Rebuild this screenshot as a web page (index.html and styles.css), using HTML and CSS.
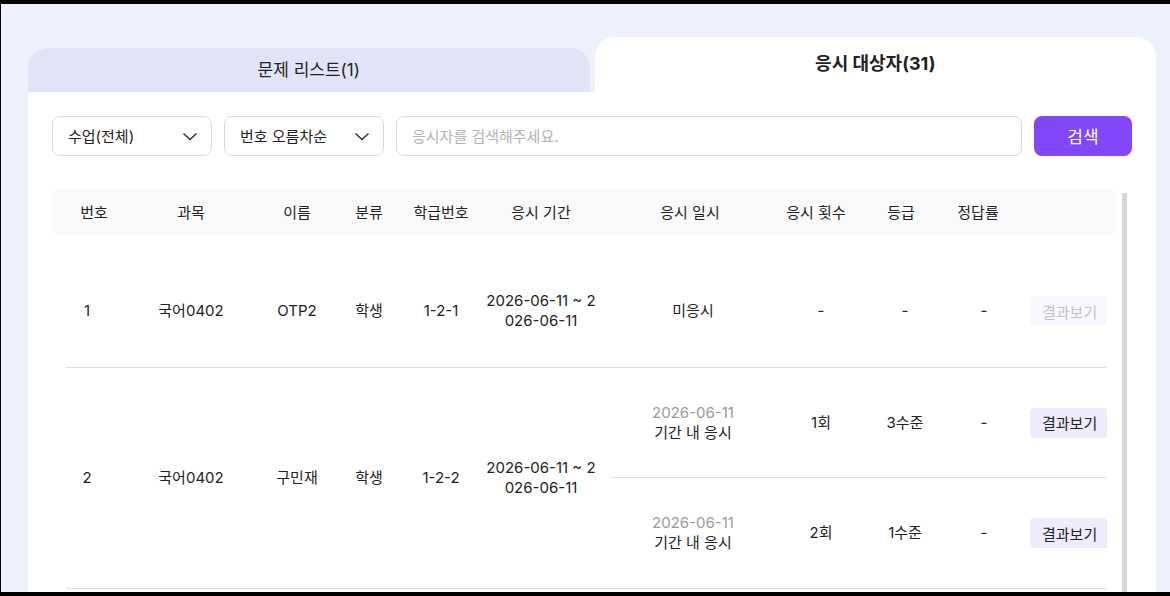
FILE: index.html
```html
<!DOCTYPE html>
<html lang="ko">
<head>
  <meta charset="UTF-8" />
  <meta name="viewport" content="width=device-width, initial-scale=1.0"/>
  <title>응시 대상자</title>
  <link rel="stylesheet" href="styles.css">
</head>
<body>

  <div class="screen">

    <!-- Tabs -->
    <div class="tabs">
      <div class="tab">문제 리스트(1)</div>
      <div class="tab active">응시 대상자(31)</div>
    </div>

    <div class="panel">

      <!-- Filters -->
      <div class="filters">
        <div class="select">
          <span>수업(전체)</span>
          <svg width="16" height="16" viewBox="0 0 16 16"><path d="M1.5 5.5l6.5 6 6.5-6" fill="none" stroke="#333" stroke-width="1.5"/></svg>
        </div>
        <div class="select">
          <span>번호 오름차순</span>
          <svg width="16" height="16" viewBox="0 0 16 16"><path d="M1.5 5.5l6.5 6 6.5-6" fill="none" stroke="#333" stroke-width="1.5"/></svg>
        </div>
        <input class="search" type="text" placeholder="응시자를 검색해주세요." />
        <button class="search-btn">검색</button>
      </div>

      <!-- Student list -->
      <div class="list">
        <div class="list-body">
          <div class="thead">
            <div>번호</div>
            <div>과목</div>
            <div>이름</div>
            <div>분류</div>
            <div>학급번호</div>
            <div>응시 기간</div>
            <div>응시 일시</div>
            <div>응시 횟수</div>
            <div>등급</div>
            <div>정답률</div>
            <div></div>
          </div>

          <div class="row first">
            <div class="cell no">1</div>
            <div class="cell">국어0402</div>
            <div class="cell">OTP2</div>
            <div class="cell">학생</div>
            <div class="cell">1-2-1</div>
            <div class="cell period">2026-06-11 ~ 2026-06-11</div>
            <div class="attempts">
              <div class="attempt">
                <div class="cell date">미응시</div>
                <div class="cell">-</div>
                <div class="cell">-</div>
                <div class="cell">-</div>
                <div class="cell action"><button class="result-btn disabled">결과보기</button></div>
              </div>
            </div>
          </div>

          <div class="row">
            <div class="cell no">2</div>
            <div class="cell">국어0402</div>
            <div class="cell">구민재</div>
            <div class="cell">학생</div>
            <div class="cell">1-2-2</div>
            <div class="cell period">2026-06-11 ~ 2026-06-11</div>
            <div class="attempts">
              <div class="attempt">
                <div class="cell date"><span class="day">2026-06-11</span><span>기간 내 응시</span></div>
                <div class="cell">1회</div>
                <div class="cell">3수준</div>
                <div class="cell">-</div>
                <div class="cell action"><button class="result-btn">결과보기</button></div>
              </div>
              <div class="attempt">
                <div class="cell date"><span class="day">2026-06-11</span><span>기간 내 응시</span></div>
                <div class="cell">2회</div>
                <div class="cell">1수준</div>
                <div class="cell">-</div>
                <div class="cell action"><button class="result-btn">결과보기</button></div>
              </div>
            </div>
          </div>
        </div>
        <div class="scrollbar"></div>
      </div>

    </div>
  </div>

</body>
</html>
```

FILE: styles.css
```css
* {
  margin: 0;
  padding: 0;
  box-sizing: border-box;
  font-family: Inter, "Noto Sans CJK KR", sans-serif;
}

body {
  background: #000;
}

.screen {
  height: 596px;
  background: #edf1fb;
  border-top: 4px solid #000;
  border-bottom: 4px solid #000;
  border-left: 1px solid #000;
  padding: 33px 14px 0 27px;
  overflow: hidden;
  color: #222;
}

/* tabs */
.tabs {
  display: flex;
  align-items: flex-end;
  gap: 5px;
}

.tab {
  flex: 1;
  height: 44px;
  background: #e2e3f6;
  border-radius: 20px 20px 0 0;
  display: flex;
  justify-content: center;
  align-items: center;
  padding-bottom: 4px;
  font-size: 17px;
}

.tab.active {
  height: 55px;
  background: white;
  font-size: 18px;
  font-weight: bold;
  padding-bottom: 5px;
}

.panel {
  background: white;
  padding: 24px 24px 0 24px;
  height: 600px;
}

/* filters */
.filters {
  display: flex;
  gap: 12px;
  height: 40px;
}

.select {
  width: 160px;
  border: 1px solid #d9d9d9;
  border-radius: 8px;
  display: flex;
  align-items: center;
  justify-content: space-between;
  padding: 0 13px 1px 15px;
  font-size: 15px;
}

.search {
  flex: 1;
  border: 1px solid #d9d9d9;
  border-radius: 8px;
  padding: 0 15px;
  font-size: 15px;
  outline: none;
}

.search::placeholder {
  color: #b3b3b3;
}

.search-btn {
  width: 98px;
  border: none;
  border-radius: 8px;
  background: #8247f9;
  color: white;
  font-size: 17px;
  padding-bottom: 2px;
}

/* list */
.list {
  display: flex;
  gap: 5px;
  margin: 33px 5px 0 0;
}

.list-body {
  flex: 1;
}

.scrollbar {
  width: 5px;
  margin-top: 4px;
  height: 420px;
  background: #d6d6d6;
}

.thead {
  display: grid;
  grid-template-columns: 56px 138px 74px 70px 74px 126px 172px 80px 90px 64px 1fr;
  align-items: center;
  height: 46px;
  padding: 0 10px 2px 14px;
  background: #f9f9f9;
  border-radius: 8px;
  font-size: 15px;
  text-align: center;
}

.row {
  display: grid;
  grid-template-columns: 56px 138px 74px 70px 74px 126px 1fr;
  margin: 0 10px 0 14px;
  border-bottom: 1px solid #dedede;
}

.row.first {
  padding-top: 20px;
}

.cell {
  display: flex;
  flex-direction: column;
  justify-content: center;
  align-items: center;
  text-align: center;
  font-size: 15px;
  line-height: 20px;
}

.cell.no {
  padding-right: 14px;
}

.cell.period {
  display: block;
  align-self: center;
  word-break: break-all;
  padding: 0 7px;
}

.attempts {
  margin-left: 6px;
}

.attempt {
  display: grid;
  grid-template-columns: 166px 90px 78px 80px 1fr;
  height: 110px;
  border-bottom: 1px solid #dedede;
}

.row.first .attempt {
  height: 112px;
}

.attempt:last-child {
  border-bottom: none;
}

.cell.date .day {
  color: #9a9a9a;
}

.cell.action {
  align-items: flex-start;
  overflow: hidden;
  padding-left: 6px;
}

.result-btn {
  height: 30px;
  padding: 0 12px;
  border: none;
  border-radius: 4px;
  background: #efebfd;
  color: #222;
  font-size: 15px;
  white-space: nowrap;
}

.result-btn.disabled {
  background: #f9f7fe;
  color: #c4c4c4;
}
```
